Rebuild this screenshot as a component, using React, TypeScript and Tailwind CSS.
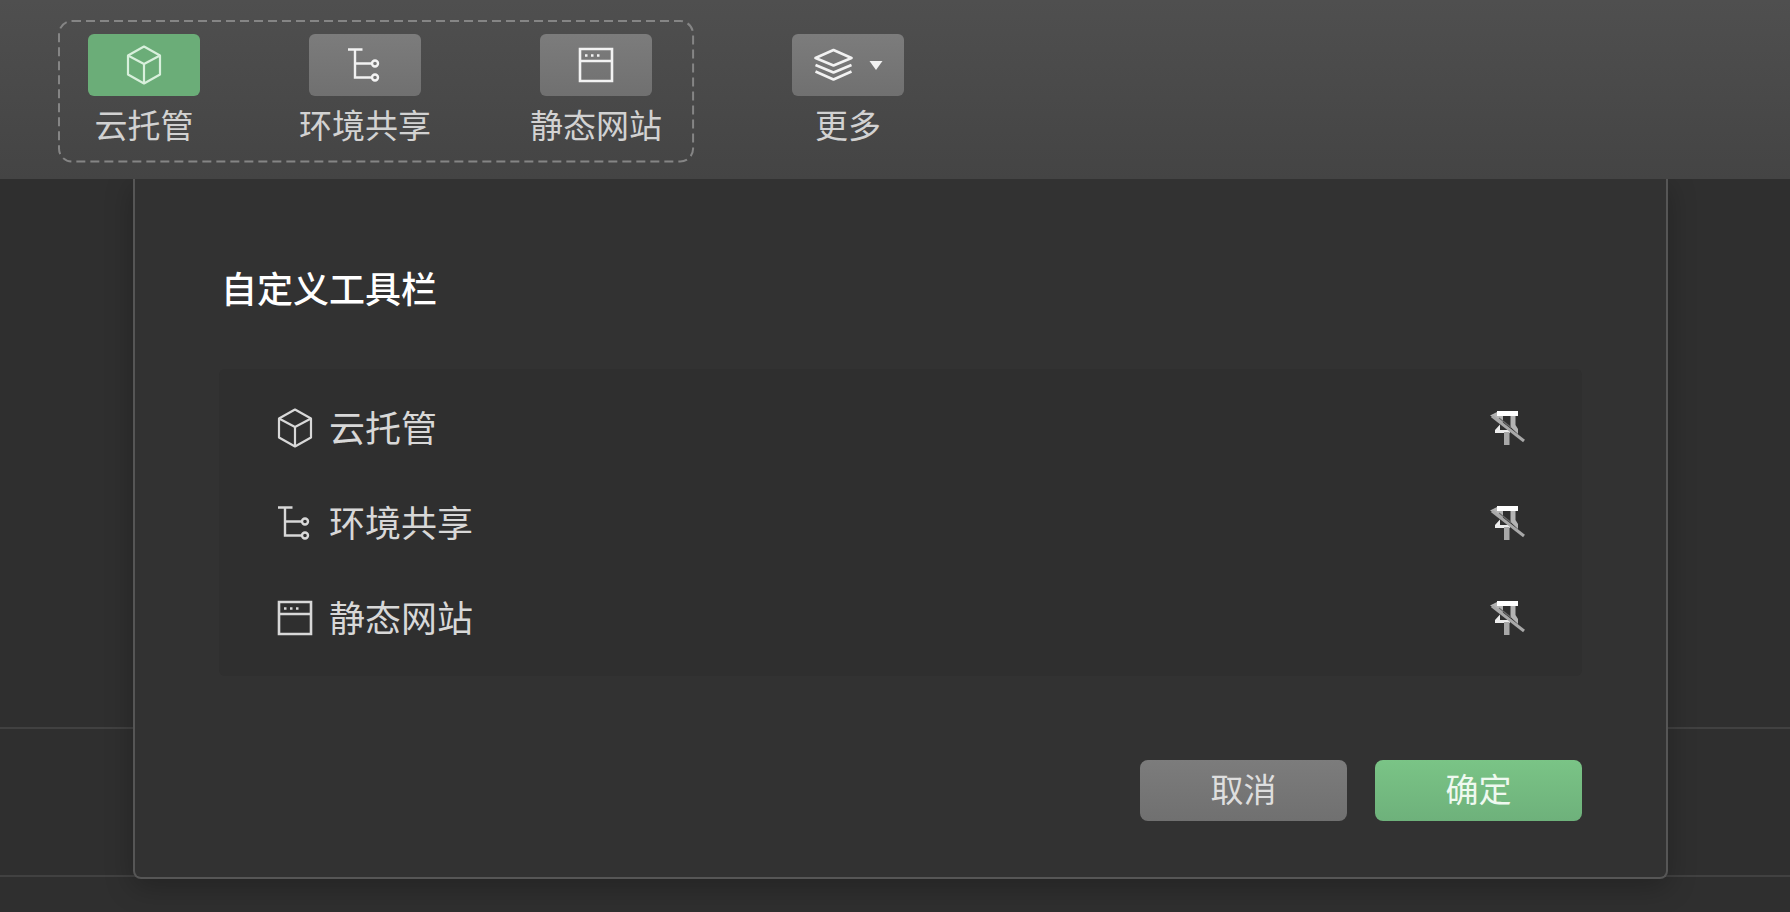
import type { ComponentType, ReactNode } from "react";

function CubeIcon() {
  return (
    <svg viewBox="0 0 40 40" className="size-10 shrink-0" fill="none" stroke="currentColor" strokeWidth="2.2" strokeLinejoin="round" aria-hidden="true">
      <path d="M20 1.500 36 10.500V29.500L20 38.500 4 29.500V10.500Z" />
      <path d="M4 10.500 20 19 36 10.500M20 19V38.500" />
    </svg>
  );
}

function TreeIcon() {
  return (
    <svg viewBox="0 0 40 40" className="size-10 shrink-0" fill="none" stroke="currentColor" strokeWidth="2.4" aria-hidden="true">
      <path d="M3 4.500H17.500M10 4.500V32.500H27M10 18.500H27" />
      <circle cx="30" cy="18.500" r="3" />
      <circle cx="30" cy="32.500" r="3" />
    </svg>
  );
}

function WindowIcon() {
  return (
    <svg viewBox="0 0 40 40" className="size-10 shrink-0" fill="none" stroke="currentColor" strokeWidth="2.6" aria-hidden="true">
      <path d="M4 4H36V36H4ZM4 16H36" />
      <path d="M9 10.500h2.500M15 10.500h2.500M21 10.500h2.500" />
    </svg>
  );
}

function LayersIcon() {
  return (
    <svg viewBox="0 0 40 40" className="size-10 shrink-0" fill="none" stroke="currentColor" strokeWidth="2.6" strokeLinejoin="round" aria-hidden="true">
      <path d="M20.500 5 38.500 13 20.500 20.500 2.500 13Z" />
      <path d="M2.500 20 20.500 27.500 38.500 20M2.500 26.500 20.500 34.500 38.500 26.500" />
    </svg>
  );
}

function UnpinIcon() {
  return (
    <svg viewBox="0 0 40 40" className="size-10" aria-hidden="true">
      <path d="M11 3H32V8H11Z" fill="#ffffff" />
      <path d="M4 7.500 11 4V8H17V15Z" fill="#b4b4b4" />
      <path d="M24.500 8H29.500V17L32 21V26L24.500 19Z" fill="#b4b4b4" />
      <path d="M9 25V22L14 16.500V22H24V25Z" fill="#ececec" />
      <path d="M18 24H23.500V37H18Z" fill="#a8a8a8" />
      <path d="M6 8 38 33" fill="none" stroke="#a8a8a8" strokeWidth="3" />
      <path d="M13 10 25 19.500" fill="none" stroke="#6c6c6c" strokeWidth="1.2" />
    </svg>
  );
}

const tools: { name: string; Icon: ComponentType; active: boolean }[] = [
  { name: "云托管", Icon: CubeIcon, active: true },
  { name: "环境共享", Icon: TreeIcon, active: false },
  { name: "静态网站", Icon: WindowIcon, active: false },
];

function ToolButton({ label, active, children }: { label: string; active?: boolean; children: ReactNode }) {
  return (
    <button type="button" className="flex flex-col items-center gap-2.5 text-[33px] leading-9 text-[#d2d2d2]">
      <span
        className={`flex h-[62px] w-28 items-center justify-center gap-4 rounded-md ${
          active ? "bg-[#6bad78] text-[#d8f0dc]" : "bg-linear-to-b from-[#7c7c7c] to-[#707070] text-[#f2f2f2]"
        }`}
      >
        {children}
      </span>
      {label}
    </button>
  );
}

export default function App() {
  return (
    <div className="flex min-h-screen flex-col overflow-hidden bg-[#2f2f2f] font-['Noto_Sans_CJK_SC',sans-serif] text-[#d8d8d8]">
      <header className="relative z-10 flex items-start gap-[98px] bg-linear-to-b from-[#4f4f4f] to-[#444444] pt-5 pb-[17px] pl-[58px]">
        <div className="relative flex gap-[99px] pt-3.5 pr-8 pb-5 pl-[30px]">
          <svg className="pointer-events-none absolute inset-0 size-full overflow-visible" aria-hidden="true">
            <rect x="1" y="1" width="99.7%" height="99%" rx="13" fill="none" stroke="#858585" strokeWidth="2" strokeDasharray="9 5" />
          </svg>
          {tools.map(({ name, Icon, active }) => (
            <ToolButton key={name} label={name} active={active}>
              <Icon />
            </ToolButton>
          ))}
        </div>
        <div className="pt-3.5">
          <ToolButton label="更多">
            <LayersIcon />
            <svg viewBox="0 0 14 10" className="h-2.5 w-3.5" fill="currentColor" aria-hidden="true">
              <path d="M0.500 1H13.500L7 10Z" />
            </svg>
          </ToolButton>
        </div>
      </header>

      <main className="grid grow grid-cols-1 grid-rows-1">
        <div className="col-start-1 row-start-1">
          <div className="h-[550px] border-b-2 border-[#414141]" />
          <div className="h-[148px] border-b-2 border-[#414141]" />
        </div>

        <section
          role="dialog"
          aria-labelledby="dialog-title"
          className="z-0 col-start-1 row-start-1 mr-[122px] ml-[133px] self-start rounded-b-lg border-x-2 border-b-2 border-[#565656] bg-[#323232] px-[84px] pt-[84px] pb-14 shadow-[0_8px_28px_rgba(0,0,0,0.25)]"
        >
          <h1 id="dialog-title" className="pl-0.5 text-4xl leading-12 font-medium text-white">
            自定义工具栏
          </h1>
          <ul className="mt-[58px] rounded-md bg-[#2f2f2f] px-14 py-[11px]">
            {tools.map(({ name, Icon }) => (
              <li key={name} className="flex h-[95px] items-center gap-3.5">
                <Icon />
                <span className="grow pb-1 text-4xl">{name}</span>
                <button type="button" aria-label={`取消固定${name}`}>
                  <UnpinIcon />
                </button>
              </li>
            ))}
          </ul>
          <div className="mt-[84px] flex justify-end gap-7 text-[33px] leading-9">
            <button type="button" className="h-[61px] w-[207px] rounded-lg bg-linear-to-b from-[#7c7c7c] to-[#707070] pb-1.5 text-[#dedede]">
              取消
            </button>
            <button type="button" className="h-[61px] w-[207px] rounded-lg bg-linear-to-b from-[#7ac486] to-[#6eb17b] pb-1.5 text-[#eff9f0]">
              确定
            </button>
          </div>
        </section>
      </main>
    </div>
  );
}
